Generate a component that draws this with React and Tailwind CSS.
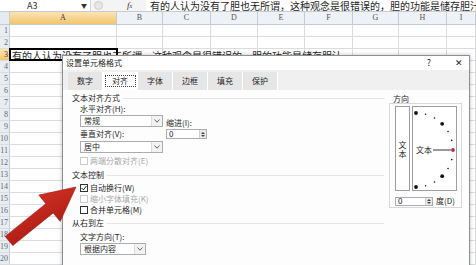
import React from "react";

const cols = [
  { label: "A", w: "w-[107px]", sel: true },
  { label: "B", w: "w-[46px]" },
  { label: "C", w: "w-[48px]" },
  { label: "D", w: "w-[47px]" },
  { label: "E", w: "w-[47px]" },
  { label: "F", w: "w-[48px]" },
  { label: "G", w: "w-[46px]" },
  { label: "H", w: "w-[48px]" },
  { label: "I", w: "w-[29px]" },
];

const rows = Array.from({ length: 20 }, (_, i) => i + 1);
const tabs = ["数字", "对齐", "字体", "边框", "填充", "保护"];

const Heading = ({ children, className = "" }) => (
  <div className={`flex items-center h-[10px] gap-[3px] ${className}`}>
    <span className="whitespace-nowrap">{children}</span>
    <div className="flex-1 h-px bg-[#e4e4e4]" />
  </div>
);

const Select = ({ value, w }) => (
  <div className={`${w} h-[12px] flex items-center border border-[#abadb3] bg-white`}>
    <span className="flex-1 pl-[3px] leading-[10px]">{value}</span>
    <div className="w-[11px] h-full border-l border-[#dcdcdc] bg-[#f2f2f2] flex items-center justify-center">
      <svg width="6" height="4" viewBox="0 0 6 4">
        <path d="M0.5 0.5 L3 3.2 L5.5 0.5" fill="none" stroke="#555" strokeWidth="0.9" />
      </svg>
    </div>
  </div>
);

const Spinner = ({ w, h }) => (
  <div className={`${w} ${h} flex items-center border border-[#abadb3] bg-white`}>
    <span className="flex-1 pl-[2px] leading-[8px]">0</span>
    <div className="w-[7px] h-full border-l border-[#cfcfcf] bg-[#e9e9e9] flex flex-col items-center justify-center gap-[1px]">
      <svg width="4" height="2" viewBox="0 0 4 2">
        <path d="M0 2 L2 0 L4 2 Z" fill="#444" />
      </svg>
      <svg width="4" height="2" viewBox="0 0 4 2">
        <path d="M0 0 L2 2 L4 0 Z" fill="#444" />
      </svg>
    </div>
  </div>
);

const Check = ({ label, checked, disabled }) => (
  <div className={`flex items-center h-[10px] gap-[2px] ${disabled ? "text-[#a9a9a9]" : ""}`}>
    <div
      className={`w-[8px] h-[8px] border bg-white flex items-center justify-center ${
        disabled ? "border-[#cacaca]" : "border-[#333]"
      }`}
    >
      {checked && (
        <svg width="6" height="6" viewBox="0 0 6 6">
          <path d="M0.6 3 L2.4 4.8 L5.4 1" fill="none" stroke="#222" strokeWidth="1" />
        </svg>
      )}
    </div>
    <span className="whitespace-nowrap">{label}</span>
  </div>
);

// dial in the 方向 box: center (4,44), radius 37
const dialDots = [90, 75, 60, 45, 30, 15, 0, -15, -30, -45, -60, -75, -90].map((a) => {
  const r = (a * Math.PI) / 180;
  return { a, x: 4 + 37 * Math.cos(r), y: 44 - 37 * Math.sin(r), big: a % 45 === 0 };
});

export default function App() {
  return (
    <div className="relative w-[476px] h-[265px] overflow-hidden bg-white font-['Noto_Sans_CJK_SC',sans-serif] text-[#1e1e1e]">
      {/* formula bar */}
      <div className="flex h-[12px] border-b border-[#c8ccd2] bg-white">
        <div className="w-[90px] flex items-center">
          <span className="ml-[27px] text-[9px] leading-[11px] text-[#333]">A3</span>
          <span className="ml-auto mr-[3px] text-[6px] text-[#333]">▼</span>
        </div>
        <div className="w-[56px] flex items-center bg-[#f4f4f4] border-l border-[#d4d4d4]">
          <div className="ml-[3px] w-[9px] h-[9px] rounded-full border border-[#cdcdcd] bg-[#e6e6e6]" />
          <span className="ml-[24px] italic text-[9px] leading-[11px] font-['Liberation_Serif',serif] text-[#333]">
            f<span className="text-[6px]">x</span>
          </span>
        </div>
        <div className="flex-1 pl-[4px] text-[10px] leading-[11px] whitespace-nowrap overflow-hidden">
          有的人认为没有了胆也无所谓，这种观念是很错误的，胆的功能是储存胆汁
        </div>
      </div>

      {/* column headers */}
      <div className="flex h-[13px] border-b border-[#c5cbd3] bg-[#eef1f5]">
        <div className="w-[10px] shrink-0 border-r border-[#c5cbd3] bg-[#e6ebf1]" />
        {cols.map((c) => (
          <div
            key={c.label}
            className={`${c.w} shrink-0 border-r border-[#c5cbd3] flex items-center justify-center text-[8px] font-['Liberation_Serif',serif] ${
              c.sel ? "bg-gradient-to-b from-[#fbe4b4] to-[#f2c56c] text-[#333]" : "text-[#555]"
            }`}
          >
            {c.label}
          </div>
        ))}
      </div>

      {/* grid rows */}
      {rows.map((n) => (
        <div key={n} className="flex h-[12px] border-b border-[#dadcdd]">
          <div
            className={`w-[10px] shrink-0 border-r border-[#c5cbd3] overflow-hidden flex items-center justify-end pr-[1px] text-[8px] font-['Liberation_Serif',serif] ${
              n === 3 ? "bg-gradient-to-b from-[#fbe4b4] to-[#f2c56c] text-[#333]" : "bg-[#e9edf2] text-[#5a6a80]"
            }`}
          >
            {n}
          </div>
          {cols.map((c, i) =>
            n === 3 && i === 0 ? (
              <div
                key={c.label}
                className={`${c.w} shrink-0 relative z-10 outline-2 outline-black -outline-offset-1 pl-[2px] pt-[2px] text-[10px] leading-[10px] whitespace-nowrap`}
              >
                有的人认为没有了胆也无所谓，这种观念是很错误的，胆的功能是储存胆汁。
              </div>
            ) : (
              <div key={c.label} className={`${c.w} shrink-0 border-r border-[#dadcdd]`} />
            )
          )}
        </div>
      ))}

      {/* dialog */}
      <div className="absolute left-[62px] top-[55px] w-[408px] h-[215px] z-20 border border-[#8f8f8f] bg-[#fdfdfd] shadow-[0_0_4px_rgba(0,0,0,0.25)] text-[8px] leading-[10px]">
        <div className="h-[14px] bg-white flex items-center pl-[3px]">
          <span>设置单元格格式</span>
          <span className="ml-auto mr-[24px] text-[9px]">?</span>
          <span className="mr-[6px] text-[9px]">✕</span>
        </div>

        <div className="h-[20px] flex items-end pl-[5px] bg-[#f0f0f0]">
          {tabs.map((t) => (
            <div
              key={t}
              className={`w-[35px] h-[18px] flex items-center justify-center border-r border-white ${
                t === "对齐" ? "bg-white" : "bg-[#e6e6e6]"
              }`}
            >
              {t === "对齐" ? (
                <span className="w-[31px] h-[12px] flex items-center justify-center border border-dotted border-[#444]">
                  {t}
                </span>
              ) : (
                t
              )}
            </div>
          ))}
        </div>

        <div className="flex pl-[9px] pt-[3px]">
          {/* left column */}
          <div className="w-[312px] flex flex-col">
            <Heading>文本对齐方式</Heading>
            <div className="flex pl-[8px] mt-[1px]">
              <div className="w-[83px] flex flex-col">
                <div className="h-[10px]">水平对齐(H):</div>
                <div className="mt-[1px]">
                  <Select value="常规" w="w-[83px]" />
                </div>
                <div className="mt-[2px] h-[10px]">垂直对齐(V):</div>
                <div className="mt-[2px]">
                  <Select value="居中" w="w-[83px]" />
                </div>
              </div>
              <div className="ml-[3px] pt-[14px]">
                <div className="h-[9px] leading-[9px]">缩进(I):</div>
                <div className="mt-[2px]">
                  <Spinner w="w-[41px]" h="h-[10px]" />
                </div>
              </div>
            </div>
            <div className="pl-[8px] mt-[3px]">
              <Check label="两端分散对齐(E)" disabled />
            </div>
            <Heading className="mt-[4px]">文本控制</Heading>
            <div className="pl-[8px] mt-[3px] flex flex-col gap-[1px]">
              <Check label="自动换行(W)" checked />
              <Check label="缩小字体填充(K)" disabled />
              <Check label="合并单元格(M)" />
            </div>
            <Heading className="mt-[3px]">从右到左</Heading>
            <div className="pl-[8px] mt-[4px] h-[10px]">文字方向(T):</div>
            <div className="pl-[8px] mt-[1px]">
              <Select value="根据内容" w="w-[66px]" />
            </div>
          </div>

          {/* 方向 group */}
          <div className="ml-[5px] flex flex-col">
            <div className="h-[9px] leading-[9px] pl-[4px] mt-[1px]">方向</div>
            <div className="w-[73px] h-[105px] border border-[#d8d8d8] flex flex-col">
              <div className="flex pt-[2px] pl-[5px]">
                <div className="w-[15px] h-[85px] border border-[#9d9d9d] bg-white flex flex-col items-center justify-center leading-[9px]">
                  <span>文</span>
                  <span>本</span>
                </div>
                <div className="relative ml-[2px] w-[45px] h-[85px]">
                  <svg width="45" height="85" viewBox="0 0 45 85" className="absolute inset-0">
                    <rect x="0.5" y="0.5" width="44" height="84" fill="#fff" stroke="#9d9d9d" />
                    <line x1="21" y1="44" x2="39" y2="44" stroke="#333" strokeWidth="1" />
                    {dialDots.map((d) => (
                      <circle
                        key={d.a}
                        cx={d.x}
                        cy={d.y}
                        r={d.big ? 1.9 : 0.8}
                        fill={d.a === 0 ? "#b3304a" : "#111"}
                      />
                    ))}
                  </svg>
                  <span className="absolute left-[4px] top-[39px] leading-[10px]">文本</span>
                </div>
              </div>
              <div className="flex items-center mt-[5px] pl-[5px]">
                <Spinner w="w-[38px]" h="h-[9px]" />
                <span className="ml-[3px]">度(D)</span>
              </div>
            </div>
          </div>
        </div>
      </div>

      {/* red arrow */}
      <svg width="476" height="265" viewBox="0 0 476 265" className="absolute inset-0 z-30 pointer-events-none">
        <defs>
          <linearGradient id="arrowFill" x1="0" y1="0" x2="0.6" y2="1">
            <stop offset="0" stopColor="#e0392c" />
            <stop offset="1" stopColor="#a3170f" />
          </linearGradient>
        </defs>
        <polygon
          points="76,187 60.2,221.5 53.2,212.9 12.8,245.6 5.2,236.4 45.8,203.7 38.8,195.1"
          fill="url(#arrowFill)"
          stroke="#9a1810"
          strokeWidth="0.6"
          strokeLinejoin="round"
        />
      </svg>
    </div>
  );
}
